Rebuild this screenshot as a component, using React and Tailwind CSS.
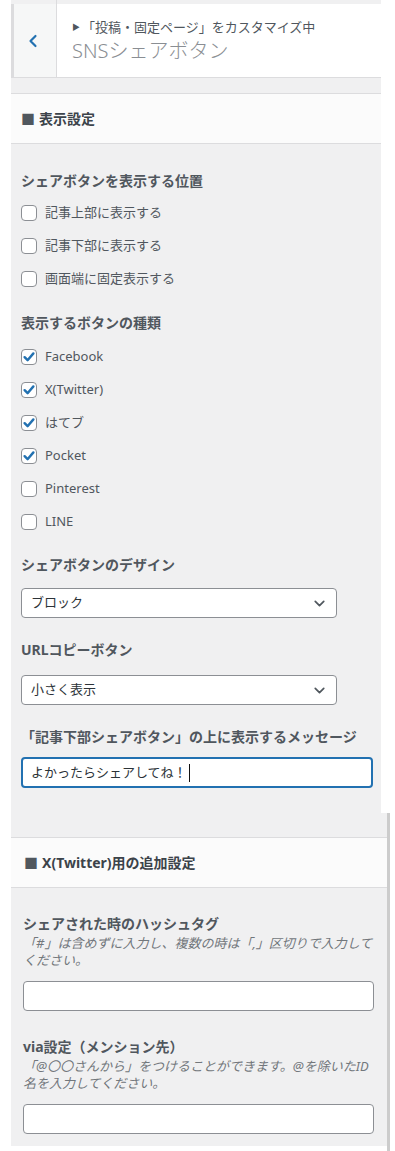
import React from 'react';
import { ChevronLeft, ChevronDown } from 'lucide-react';

const font = { fontFamily: '"Noto Sans", "Noto Sans CJK JP", sans-serif' };

const Checkbox = ({ checked, label }) => (
  <div className="h-[33px] flex items-center">
    <span className="w-[16px] h-[16px] rounded-[4px] border border-[#8c8f94] bg-white flex items-center justify-center shrink-0">
      {checked && (
        <svg width="14" height="14" viewBox="0 0 14 14">
          <path d="M2.6 7.2 L5.6 10.2 L11.4 3.4" fill="none" stroke="#2271b1" strokeWidth="2.4" strokeLinecap="round" strokeLinejoin="round" />
        </svg>
      )}
    </span>
    <span className="ml-[8px] text-[13px] text-[#50575e] leading-none">{label}</span>
  </div>
);

const Label = ({ children, className = '' }) => (
  <div className={`h-[20px] flex items-center text-[14px] font-bold text-[#50575e] whitespace-nowrap ${className}`}>
    {children}
  </div>
);

const Select = ({ value, className = '' }) => (
  <div className={`w-[316px] h-[30px] rounded-[4px] border border-[#8c8f94] bg-white flex items-center justify-between pl-[9px] pr-[8px] ${className}`}>
    <span className="text-[13px] text-[#2c3338]">{value}</span>
    <ChevronDown size={17} strokeWidth={2.4} className="text-[#50575e]" />
  </div>
);

const SectionTitle = ({ children, className = '' }) => (
  <div className={`bg-[#fbfbfb] border-b border-[#dcdcde] flex items-center text-[14px] font-bold text-[#3c434a] ${className}`}>
    <span className="text-[#50575e] mr-[4px]">■</span>
    {children}
  </div>
);

export default function App() {
  return (
    <div className="w-[395px] h-[1151px] bg-white overflow-hidden" style={font}>
      {/* first panel */}
      <div className="ml-[11px] w-[370px] bg-[#f0f0f1]">
        <div className="h-[4px] flex">
          <div className="w-[46px] border-r border-[#dcdcde]" />
        </div>
        <div className="h-[73px] bg-white border-b border-[#dcdcde] flex box-content">
          <div className="w-[46px] bg-[#f6f7f7] border-l-[3px] border-[#2271b1] border-r border-[#dcdcde] flex items-center justify-center">
            <ChevronLeft size={20} strokeWidth={2.6} className="text-[#2271b1] -ml-[4px]" />
          </div>
          <div className="pl-[15px] pt-[12px]">
            <div className="flex items-center text-[13px] text-[#50575e] leading-[20px]">
              <span className="text-[8px] text-[#50575e] mr-[2px] mt-[1px]">▶</span>
              <span>「投稿・固定ページ」をカスタマイズ中</span>
            </div>
            <div className="text-[20px] font-light text-[#8a8e93] leading-[28px]">SNSシェアボタン</div>
          </div>
        </div>
        <div className="h-[15px] border-b border-[#dcdcde] box-content" />
        <SectionTitle className="h-[49px] pl-[10px] box-content">表示設定</SectionTitle>

        <div className="pl-[10px] pr-[9px] pt-[26px] pb-[25px]">
          <Label>シェアボタンを表示する位置</Label>
          <div className="mt-[6px]">
            <Checkbox label="記事上部に表示する" />
            <Checkbox label="記事下部に表示する" />
            <Checkbox label="画面端に固定表示する" />
          </div>

          <Label className="mt-[17px]">表示するボタンの種類</Label>
          <div className="mt-[8px]">
            <Checkbox checked label="Facebook" />
            <Checkbox checked label="X(Twitter)" />
            <Checkbox checked label="はてブ" />
            <Checkbox checked label="Pocket" />
            <Checkbox label="Pinterest" />
            <Checkbox label="LINE" />
          </div>

          <Label className="mt-[16px]">シェアボタンのデザイン</Label>
          <Select value="ブロック" className="mt-[14px]" />

          <Label className="mt-[21px]">URLコピーボタン</Label>
          <Select value="小さく表示" className="mt-[16px]" />

          <Label className="mt-[21px]">「記事下部シェアボタン」の上に表示するメッセージ</Label>
          <div className="mt-[11px] w-[352px] h-[31px] rounded-[4px] border-2 border-[#2271b1] bg-white flex items-center pl-[8px]">
            <span className="text-[13px] text-[#2c3338]">よかったらシェアしてね！</span>
            <span className="w-[1px] h-[18px] bg-[#111] ml-[2px]" />
          </div>
        </div>
      </div>

      {/* second panel */}
      <div className="flex ml-[11px]">
        <div className="w-[376px] bg-[#f0f0f1] h-[333px]">
          <div className="h-[24px] border-b border-[#dcdcde] box-content" />
          <SectionTitle className="h-[49px] pl-[13px] box-content">X(Twitter)用の追加設定</SectionTitle>
          <div className="pl-[12px] pt-[25px]">
            <Label>シェアされた時のハッシュタグ</Label>
            <div className="mt-[2px] text-[13px] italic text-[#72777c] leading-[17px] whitespace-nowrap">
              「#」は含めずに入力し、複数の時は「,」区切りで入力して<br />ください。
            </div>
            <div className="mt-[12px] w-[351px] h-[30px] rounded-[4px] border border-[#8c8f94] bg-white" />

            <Label className="mt-[25px]">via設定（メンション先）</Label>
            <div className="mt-[2px] text-[13px] italic text-[#72777c] leading-[17px] whitespace-nowrap">
              「@〇〇さんから」をつけることができます。@を除いたID<br />名を入力してください。
            </div>
            <div className="mt-[12px] w-[351px] h-[30px] rounded-[4px] border border-[#8c8f94] bg-white" />
          </div>
        </div>
        <div className="w-[3px] h-[338px] bg-[#cccccc]" />
      </div>
    </div>
  );
}
